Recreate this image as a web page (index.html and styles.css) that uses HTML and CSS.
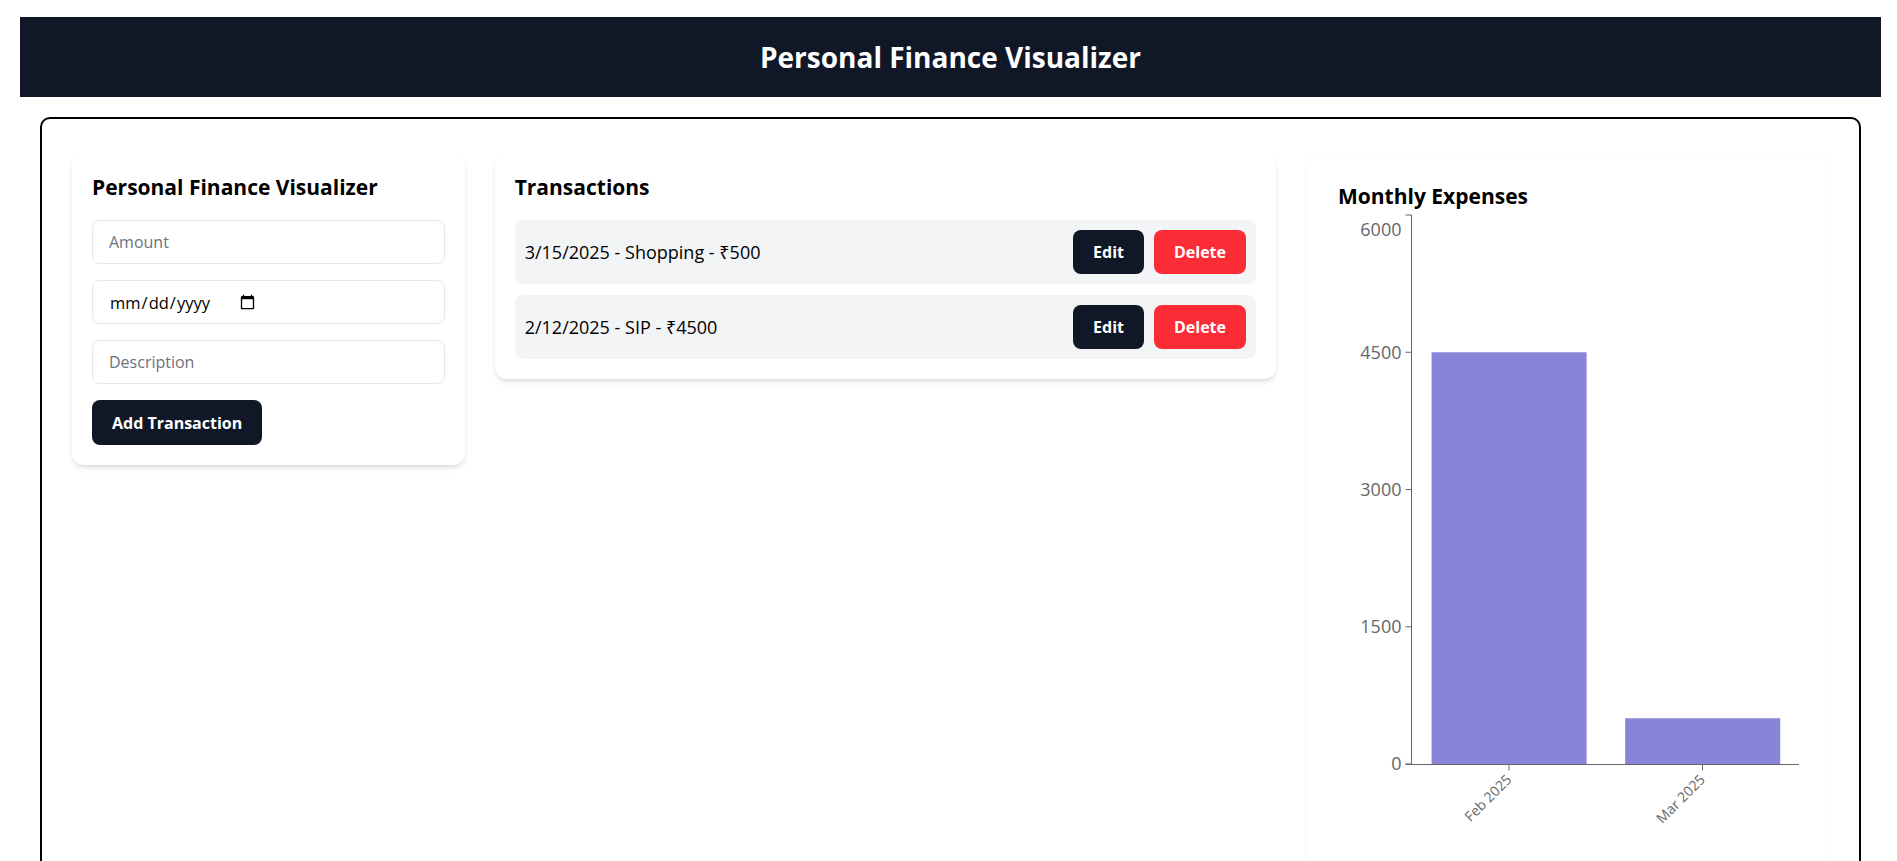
FILE: index.html
```html
<!DOCTYPE html>
<html lang="en">
<head>
    <meta charset="UTF-8">
    <meta name="viewport" content="width=device-width, initial-scale=1.0">
    <title>Personal Finance Visualizer</title>
    <link rel="stylesheet" href="styles.css">
</head>
<body>
    <header class="topbar">
        <h1>Personal Finance Visualizer</h1>
    </header>
    <main class="wrap">
        <div class="board">
            <section class="card form-card">
                <h2>Personal Finance Visualizer</h2>
                <form class="tx-form">
                    <input type="number" placeholder="Amount">
                    <input type="date">
                    <input type="text" placeholder="Description">
                    <div>
                        <button type="submit" class="btn btn-dark btn-add">Add Transaction</button>
                    </div>
                </form>
            </section>

            <section class="card list-card">
                <h2>Transactions</h2>
                <ul class="tx-list">
                    <li class="tx-row">
                        <span>3/15/2025 - Shopping - ₹500</span>
                        <div class="tx-actions">
                            <button class="btn btn-dark">Edit</button>
                            <button class="btn btn-red">Delete</button>
                        </div>
                    </li>
                    <li class="tx-row">
                        <span>2/12/2025 - SIP - ₹4500</span>
                        <div class="tx-actions">
                            <button class="btn btn-dark">Edit</button>
                            <button class="btn btn-red">Delete</button>
                        </div>
                    </li>
                </ul>
            </section>

            <section class="card chart-card">
                <h2>Monthly Expenses</h2>
                <svg class="chart" width="461" height="640" viewBox="0 0 461 640">
                    <!-- bars -->
                    <rect x="93.6" y="141.25" width="155" height="411.75" fill="#8884d8"/>
                    <rect x="287.2" y="507.25" width="155" height="45.75" fill="#8884d8"/>
                    <!-- y axis -->
                    <g class="axis">
                        <line x1="73.5" y1="4" x2="73.5" y2="553"/>
                        <line x1="67.5" y1="4" x2="73.5" y2="4"/>
                        <line x1="67.5" y1="141.25" x2="73.5" y2="141.25"/>
                        <line x1="67.5" y1="278.5" x2="73.5" y2="278.5"/>
                        <line x1="67.5" y1="415.75" x2="73.5" y2="415.75"/>
                        <line x1="67.5" y1="553" x2="73.5" y2="553"/>
                    </g>
                    <g class="ytick">
                        <text x="63.5" y="18.6" dy="0.355em">6000</text>
                        <text x="63.5" y="141.25" dy="0.355em">4500</text>
                        <text x="63.5" y="278.5" dy="0.355em">3000</text>
                        <text x="63.5" y="415.75" dy="0.355em">1500</text>
                        <text x="63.5" y="553" dy="0.355em">0</text>
                    </g>
                    <!-- x axis -->
                    <g class="axis">
                        <line x1="67.5" y1="553.5" x2="461" y2="553.5"/>
                        <line x1="171" y1="553.5" x2="171" y2="559.5"/>
                        <line x1="364.5" y1="553.5" x2="364.5" y2="559.5"/>
                    </g>
                    <g class="xtick">
                        <text x="171" y="566" dy="0.355em" transform="rotate(-45 171 566)">Feb 2025</text>
                        <text x="364.5" y="566" dy="0.355em" transform="rotate(-45 364.5 566)">Mar 2025</text>
                    </g>
                </svg>
            </section>
        </div>
    </main>
</body>
</html>
```
FILE: styles.css
```css
body {
    font-family: "Open Sans", "Noto Sans", sans-serif;
    margin: 0;
    padding: 17px 16px 0 20px;
    background: #fff;
    color: #000;
}
.topbar {
    height: 80px;
    background: #101828;
    display: flex;
    justify-content: center;
    align-items: center;
}
.topbar h1 {
    margin: 0;
    color: #fff;
    font-size: 28px;
    font-weight: 700;
}
.wrap {
    padding: 20px 20px 0;
}
.board {
    border: 2px solid #000;
    border-radius: 10px;
    padding: 34px 30px 30px;
    display: grid;
    grid-template-columns: 393fr 782fr 522fr;
    gap: 30px;
    align-items: start;
}
.card {
    background: #fff;
    border-radius: 12px;
    padding: 20px;
    box-shadow: 0 4px 6px -1px rgba(0, 0, 0, 0.1), 0 2px 4px -2px rgba(0, 0, 0, 0.1);
}
.card h2 {
    margin: 0 0 18px;
    font-size: 21px;
    line-height: 29px;
    font-weight: 700;
}
.tx-form {
    display: flex;
    flex-direction: column;
    gap: 16px;
}
.tx-form input {
    box-sizing: border-box;
    width: 100%;
    height: 44px;
    padding: 0 16px;
    border: 1px solid #e5e7eb;
    border-radius: 8px;
    font-family: inherit;
    font-size: 16px;
    color: #000;
    background: #fff;
    outline: none;
}
.tx-form input::placeholder {
    color: #6b7280;
}
.tx-form input[type="date"] {
    font-size: 16.5px;
}
.tx-form input[type="date"]::-webkit-datetime-edit {
    flex: 0 0 auto;
}
.tx-form input[type="date"]::-webkit-calendar-picker-indicator {
    margin-left: 2px;
}
.btn {
    border: none;
    border-radius: 8px;
    height: 44px;
    padding: 0 20px;
    font-family: inherit;
    font-size: 16px;
    font-weight: 700;
    color: #fff;
    cursor: pointer;
}
.btn-dark {
    background: #101828;
}
.btn-red {
    background: #fb2c36;
}
.btn-add {
    height: 45px;
}
.tx-list {
    list-style: none;
    margin: 0;
    padding: 0;
    display: flex;
    flex-direction: column;
    gap: 11px;
}
.tx-row {
    display: flex;
    justify-content: space-between;
    align-items: center;
    background: #f3f4f6;
    border-radius: 8px;
    padding: 10px;
    font-size: 18px;
}
.tx-actions {
    display: flex;
    gap: 10px;
}
.chart-card {
    margin-top: 2px;
    padding: 27px 30px 20px 32px;
    box-shadow: 0 1px 3px rgba(0, 0, 0, 0.06);
}
.chart-card h2 {
    margin: 0;
}
.chart {
    display: block;
    overflow: visible;
}
.axis line {
    stroke: #666;
    stroke-width: 1;
}
.ytick text {
    font-size: 18px;
    fill: #666;
    text-anchor: end;
}
.xtick text {
    font-size: 14px;
    fill: #666;
    text-anchor: end;
}
```
